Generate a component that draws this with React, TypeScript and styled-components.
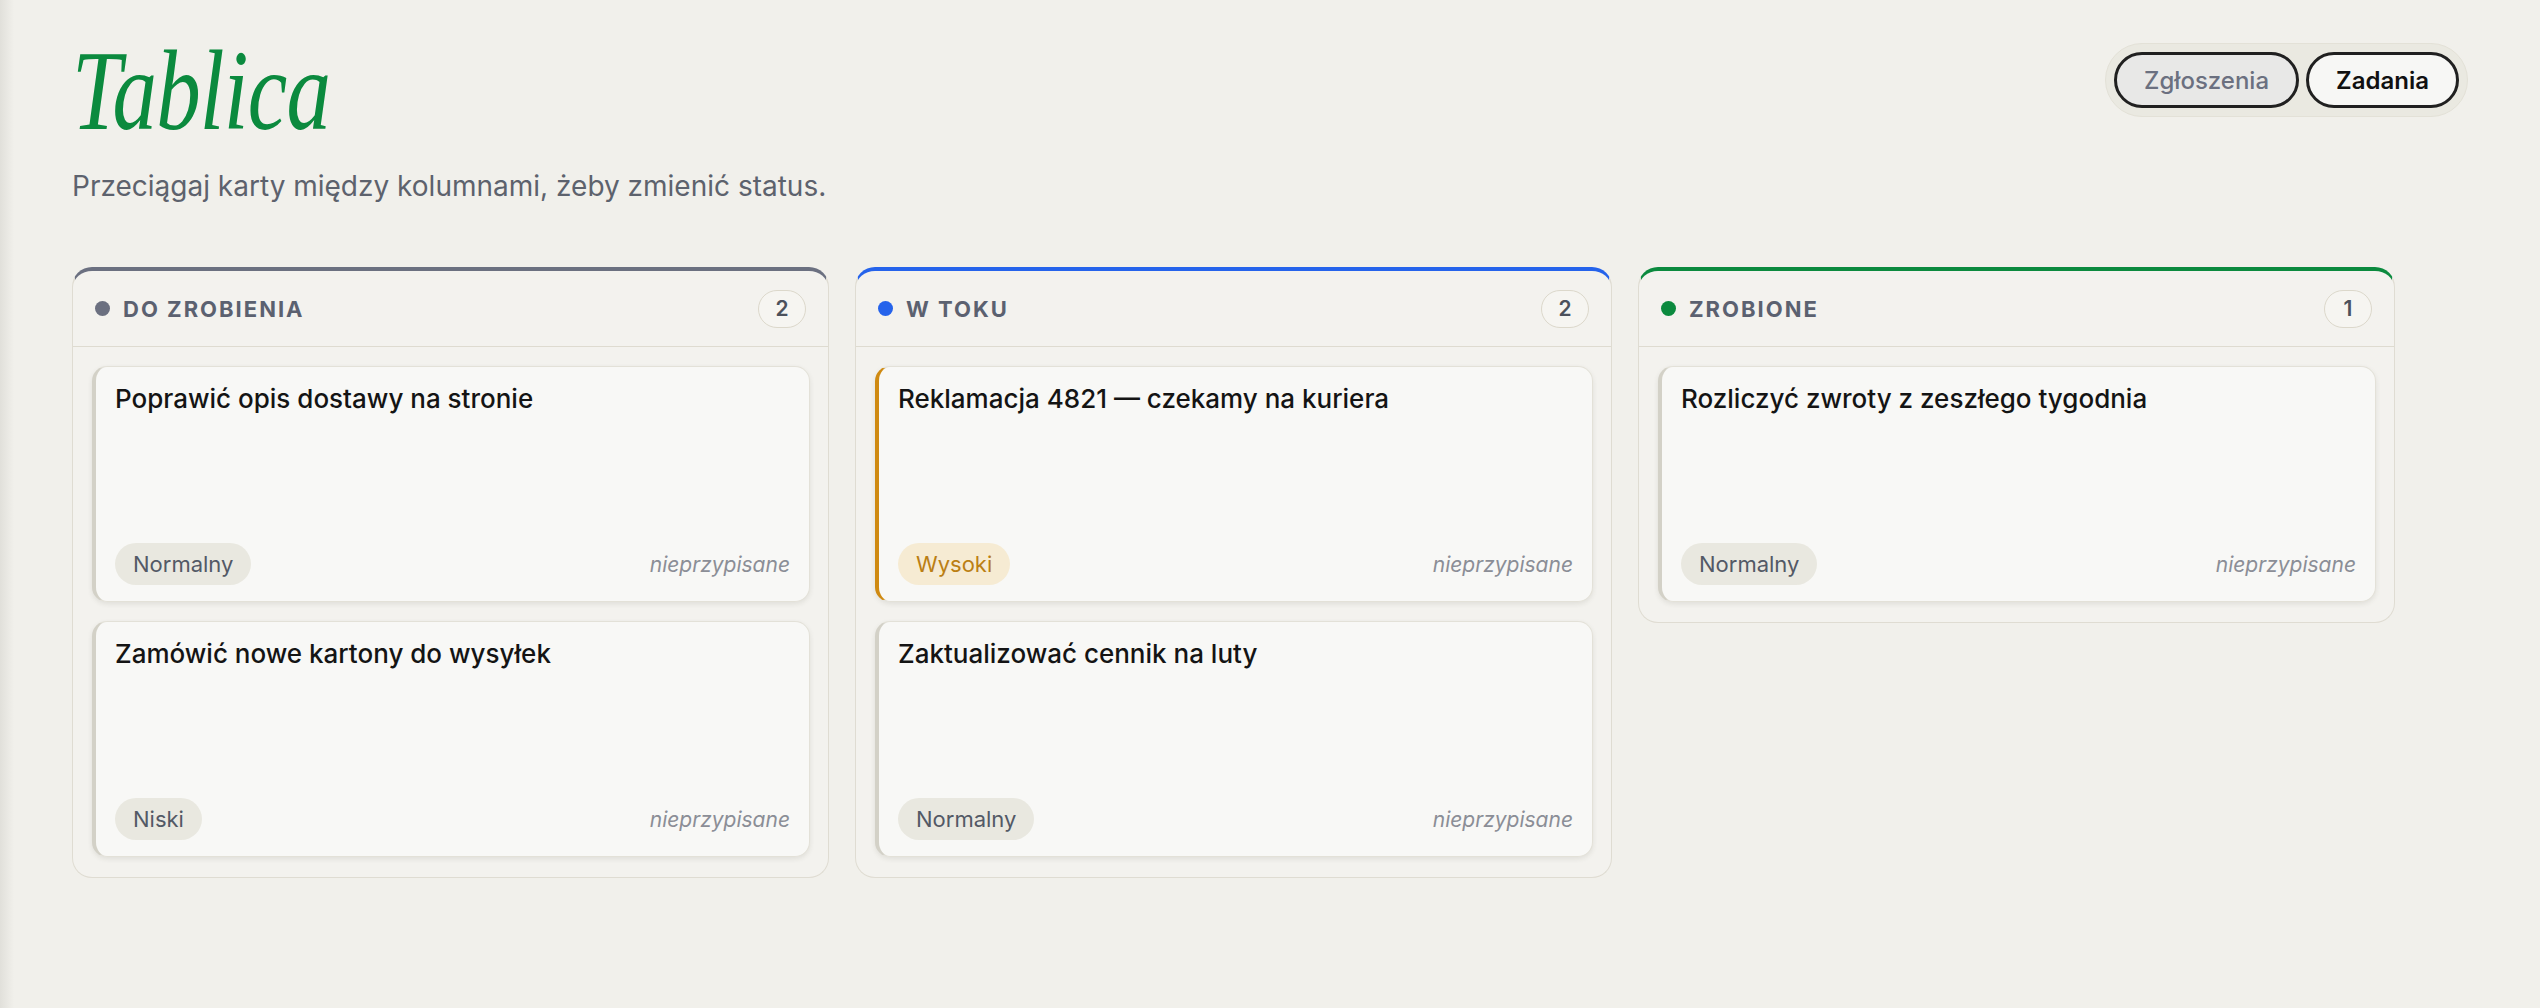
import React from 'react';
import styled, { createGlobalStyle } from 'styled-components';

const GlobalStyle = createGlobalStyle`
  * {
    box-sizing: border-box;
  }

  html,
  body {
    margin: 0;
    min-height: 100vh;
    background: linear-gradient(90deg, rgba(60, 58, 50, 0.09) 0, rgba(60, 58, 50, 0) 14px),
      #f1f0eb;
    font-family: Inter, 'Noto Sans', sans-serif;
    color: #141414;
  }
`;

const Page = styled.main`
  padding: 34px 72px;
`;

const TopBar = styled.header`
  display: flex;
  justify-content: space-between;
  align-items: flex-start;
`;

const TitleBlock = styled.div`
  display: flex;
  flex-direction: column;
`;

const Title = styled.h1`
  margin: 0;
  font-family: 'Liberation Serif', serif;
  font-style: italic;
  font-weight: 400;
  font-size: 114px;
  line-height: 1;
  color: #0b8a3e;
  letter-spacing: -1px;
  transform: scaleX(0.78);
  transform-origin: left center;
`;

const Subtitle = styled.p`
  margin: 19px 0 0;
  font-size: 28px;
  line-height: 1.4;
  color: #5d626d;
`;

const Toggle = styled.div`
  margin-top: 9px;
  display: flex;
  gap: 7px;
  padding: 8px;
  border-radius: 999px;
  border: 1px solid #e3e1d7;
  background: #eae9e1;
`;

const ToggleButton = styled.button<{ active?: boolean }>`
  height: 56px;
  padding: 0 27px;
  border: 3px solid #202020;
  border-radius: 999px;
  font-family: Inter, sans-serif;
  font-size: 24px;
  font-weight: ${(p) => (p.active ? 600 : 500)};
  color: ${(p) => (p.active ? '#111' : '#6b7080')};
  background: ${(p) => (p.active ? '#f7f7f5' : '#e8e8e7')};
  cursor: pointer;
`;

const Board = styled.section`
  margin-top: 61px;
  display: grid;
  grid-template-columns: repeat(3, 757px);
  gap: 26px;
  align-items: start;
`;

const Column = styled.div<{ accent: string }>`
  border: 1px solid #dfdcd2;
  border-top: 4px solid ${(p) => p.accent};
  border-radius: 20px;
  background: rgba(255, 255, 255, 0.18);
`;

const ColumnHeader = styled.div`
  height: 76px;
  padding: 0 22px;
  display: flex;
  align-items: center;
  border-bottom: 1px solid #dedbd0;
`;

const Dot = styled.span<{ color: string }>`
  width: 15px;
  height: 15px;
  border-radius: 50%;
  background: ${(p) => p.color};
  margin-right: 13px;
`;

const ColumnTitle = styled.h2`
  margin: 0;
  flex: 1;
  font-size: 22px;
  font-weight: 700;
  letter-spacing: 2px;
  color: #5b6170;
`;

const Count = styled.span`
  min-width: 48px;
  height: 38px;
  padding: 0 14px;
  display: flex;
  align-items: center;
  justify-content: center;
  border-radius: 999px;
  border: 1px solid #dcd8cb;
  background: #f6f5f1;
  font-size: 21px;
  font-weight: 600;
  color: #4c515c;
`;

const CardList = styled.div`
  display: flex;
  flex-direction: column;
  gap: 19px;
  padding: 19px 18px 20px 19px;
`;

const Card = styled.article<{ edge: string }>`
  min-height: 236px;
  display: flex;
  flex-direction: column;
  justify-content: space-between;
  padding: 14px 19px 16px 19px;
  background: #f8f8f6;
  border: 1px solid #e3e1d8;
  border-left: 4px solid ${(p) => p.edge};
  border-radius: 15px;
  box-shadow: 0 2px 5px rgba(60, 55, 40, 0.1);
`;

const CardTitle = styled.h3`
  margin: 0;
  font-size: 26px;
  font-weight: 500;
  line-height: 1.35;
  color: #141414;
`;

const CardFooter = styled.div`
  display: flex;
  align-items: center;
  justify-content: space-between;
`;

const Priority = styled.span<{ bg: string; fg: string }>`
  height: 42px;
  line-height: 42px;
  padding: 0 18px;
  border-radius: 999px;
  font-size: 22px;
  background: ${(p) => p.bg};
  color: ${(p) => p.fg};
`;

const Assignee = styled.span`
  font-size: 21px;
  font-style: italic;
  color: #8b8e96;
`;

type Level = 'Niski' | 'Normalny' | 'Wysoki';

const levels: Record<Level, { bg: string; fg: string; edge: string }> = {
  Niski: { bg: '#e9e8e0', fg: '#535966', edge: '#d3d1c7' },
  Normalny: { bg: '#e9e8e0', fg: '#535966', edge: '#d3d1c7' },
  Wysoki: { bg: '#f6ebd3', fg: '#bb7f14', edge: '#cf8a12' },
};

interface Task {
  title: string;
  level: Level;
}

const columns: { name: string; accent: string; tasks: Task[] }[] = [
  {
    name: 'DO ZROBIENIA',
    accent: '#6b7080',
    tasks: [
      { title: 'Poprawić opis dostawy na stronie', level: 'Normalny' },
      { title: 'Zamówić nowe kartony do wysyłek', level: 'Niski' },
    ],
  },
  {
    name: 'W TOKU',
    accent: '#2563eb',
    tasks: [
      { title: 'Reklamacja 4821 — czekamy na kuriera', level: 'Wysoki' },
      { title: 'Zaktualizować cennik na luty', level: 'Normalny' },
    ],
  },
  {
    name: 'ZROBIONE',
    accent: '#0b8a3e',
    tasks: [{ title: 'Rozliczyć zwroty z zeszłego tygodnia', level: 'Normalny' }],
  },
];

export default function App() {
  return (
    <>
      <GlobalStyle />
      <Page>
        <TopBar>
          <TitleBlock>
            <Title>Tablica</Title>
            <Subtitle>Przeciągaj karty między kolumnami, żeby zmienić status.</Subtitle>
          </TitleBlock>
          <Toggle>
            <ToggleButton>Zgłoszenia</ToggleButton>
            <ToggleButton active>Zadania</ToggleButton>
          </Toggle>
        </TopBar>

        <Board>
          {columns.map((col) => (
            <Column key={col.name} accent={col.accent}>
              <ColumnHeader>
                <Dot color={col.accent} />
                <ColumnTitle>{col.name}</ColumnTitle>
                <Count>{col.tasks.length}</Count>
              </ColumnHeader>
              <CardList>
                {col.tasks.map((task) => {
                  const lv = levels[task.level];
                  return (
                    <Card key={task.title} edge={lv.edge}>
                      <CardTitle>{task.title}</CardTitle>
                      <CardFooter>
                        <Priority bg={lv.bg} fg={lv.fg}>
                          {task.level}
                        </Priority>
                        <Assignee>nieprzypisane</Assignee>
                      </CardFooter>
                    </Card>
                  );
                })}
              </CardList>
            </Column>
          ))}
        </Board>
      </Page>
    </>
  );
}
